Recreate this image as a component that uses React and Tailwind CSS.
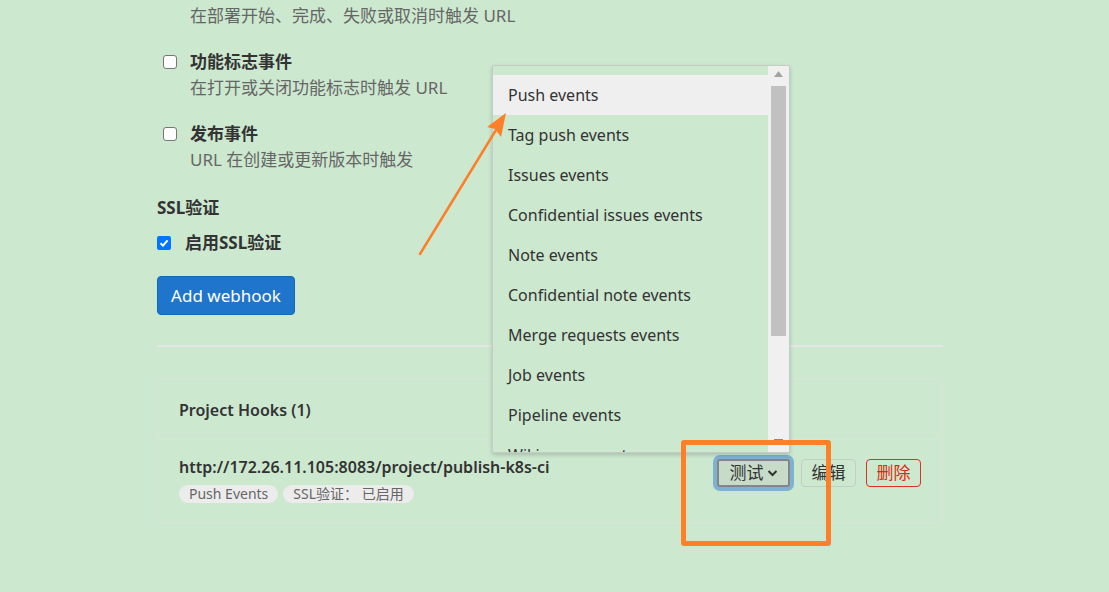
import React from "react";

const F = { fontFamily: '"Noto Sans", "Noto Sans CJK SC", sans-serif' };

function Check({ checked }) {
  if (checked) {
    return (
      <span className="w-[14px] h-[14px] rounded-[2px] bg-[#0075ff] flex items-center justify-center shrink-0">
        <svg width="12" height="12" viewBox="0 0 12 12"><path d="M2.5 6.2 L5 8.6 L9.6 3.4" stroke="#fff" strokeWidth="2" fill="none" /></svg>
      </span>
    );
  }
  return <span className="block w-[14px] h-[14px] rounded-[3px] bg-white border border-[#767676] shrink-0" />;
}

const items = [
  "Push events",
  "Tag push events",
  "Issues events",
  "Confidential issues events",
  "Note events",
  "Confidential note events",
  "Merge requests events",
  "Job events",
  "Pipeline events",
  "Wiki page events",
];

export default function App() {
  return (
    <div style={F} className="relative w-[1109px] h-[592px] bg-[#cce8cf] overflow-hidden text-[#333]">
      <div className="ml-[157px] w-[786px] pt-[3px]">
        <div className="pl-[33px] text-[17px] leading-[26px] text-[#666]">在部署开始、完成、失败或取消时触发 URL</div>

        <div className="mt-[20px] flex">
          <div className="w-[33px] pl-[6px] pt-[6px]"><Check /></div>
          <div>
            <div className="text-[17px] leading-[26px] font-bold text-[#333]">功能标志事件</div>
            <div className="text-[17px] leading-[26px] text-[#666]">在打开或关闭功能标志时触发 URL</div>
          </div>
        </div>

        <div className="mt-[20px] flex">
          <div className="w-[33px] pl-[6px] pt-[6px]"><Check /></div>
          <div>
            <div className="text-[17px] leading-[26px] font-bold text-[#333]">发布事件</div>
            <div className="text-[17px] leading-[26px] text-[#666]">URL 在创建或更新版本时触发</div>
          </div>
        </div>

        <div className="mt-[22px] text-[17px] leading-[26px] font-bold text-[#333]">SSL验证</div>

        <div className="mt-[9px] flex items-center h-[26px]">
          <Check checked />
          <span className="ml-[14px] text-[17px] font-bold text-[#333]">启用SSL验证</span>
        </div>

        <button className="mt-[20px] h-[39px] w-[138px] rounded-[4px] bg-[#1f75cb] border border-[#1068bf] text-white text-[17px] flex items-center justify-center">
          Add webhook
        </button>

        <div className="mt-[30px] h-[2px] bg-[#e4e6e4]" />

        <div className="mt-[31px] border border-[#d9e4d9] rounded-[3px]">
          <div className="h-[61px] pt-[2px] px-[21px] flex items-center text-[16px] font-semibold text-[#333] border-b border-[#d9e4d9]">
            Project Hooks (1)
          </div>
          <div className="h-[82px] px-[21px] flex justify-between">
            <div className="pt-[15px]">
              <div className="text-[16px] leading-[24px] font-semibold text-[#333]">http://172.26.11.105:8083/project/publish-k8s-ci</div>
              <div className="mt-[6px] flex gap-[5px]">
                <span className="h-[18px] px-[10px] rounded-full bg-[#ececec] text-[14px] leading-[18px] text-[#666]">Push Events</span>
                <span className="h-[18px] px-[10px] rounded-full bg-[#ececec] text-[14px] leading-[18px] text-[#666]">SSL验证：&nbsp;已启用</span>
              </div>
            </div>
            <div className="pt-[19px] flex items-start gap-[10px]">
              <button className="h-[28px] w-[73px] rounded-[3px] border-2 border-[#858585] bg-[#c6dcc8] shadow-[0_0_0_4px_#7fb1d3] text-[17px] text-[#333] flex items-center justify-center gap-[3px]">
                测试
                <svg width="11" height="8" viewBox="0 0 11 8"><path d="M1.5 2 L5.5 6 L9.5 2" stroke="#333" strokeWidth="2" fill="none" /></svg>
              </button>
              <button className="ml-[1px] h-[28px] w-[55px] rounded-[4px] border border-[#c4cdc4] text-[17px] text-[#333] flex items-center justify-center">编辑</button>
              <button className="h-[28px] w-[55px] rounded-[4px] border border-[#e0301e] text-[17px] text-[#dd2b0e] flex items-center justify-center">删除</button>
            </div>
          </div>
        </div>
      </div>

      {/* dropdown */}
      <div className="absolute left-[492px] top-[65px] w-[298px] h-[388px] border border-[#c7cbc7] rounded-[2px] shadow-[0_2px_4px_rgba(0,0,0,0.18)] bg-[#cce8cf] overflow-hidden flex">
        <div className="flex-1 pt-[9px]">
          {items.map((t, i) => (
            <div key={t} className={`h-[40px] pl-[15px] flex items-center text-[16px] text-[#333] ${i === 0 ? "bg-[#efefef]" : ""}`}>{t}</div>
          ))}
        </div>
        <div className="w-[21px] bg-[#f0f0f0] relative">
          <svg className="absolute left-[6px] top-[5px]" width="9" height="6" viewBox="0 0 9 6"><path d="M0 6 L4.5 0 L9 6 Z" fill="#a3a3a3" /></svg>
          <div className="absolute left-[3px] top-[20px] w-[15px] h-[250px] bg-[#c1c1c1]" />
          <div className="absolute left-[6px] top-[373px] w-[9px] h-[2px] bg-[#8a8a8a]" />
        </div>
      </div>

      {/* annotations */}
      <div className="absolute left-[681px] top-[440px] w-[150px] h-[106px] border-[5px] border-[#fd7f28] rounded-[3px]" />
      <svg className="absolute left-0 top-0" width="1109" height="592" viewBox="0 0 1109 592">
        <line x1="420" y1="254" x2="496" y2="130" stroke="#fd7f28" strokeWidth="2.5" strokeLinecap="round" />
        <path d="M506 113 L501 137 L495 129 L487 127 Z" fill="#fd7f28" />
      </svg>
    </div>
  );
}
